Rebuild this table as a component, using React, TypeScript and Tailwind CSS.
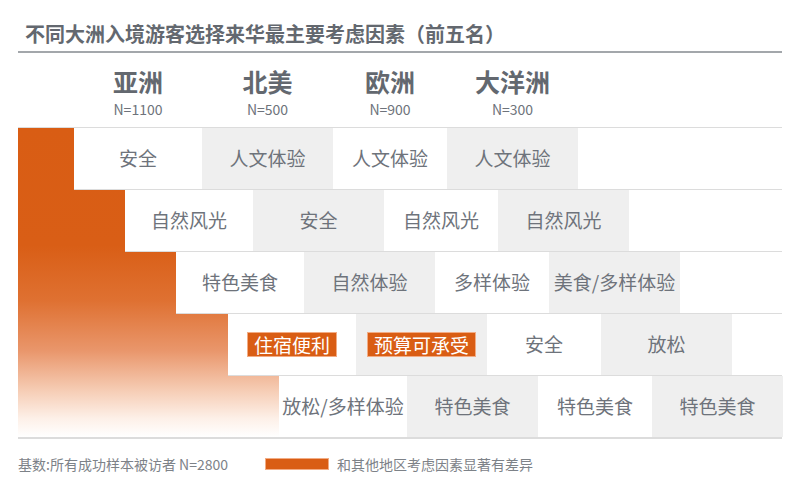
import React from "react";

type Cell = { text: string; hot?: boolean };

const WIDTHS = ["w-[128px]", "w-[131px]", "w-[114px]", "w-[131px]"];
const BG = ["bg-white", "bg-[#efefef]", "bg-white", "bg-[#efefef]"];

const REGIONS = [
  { name: "亚洲", n: "N=1100" },
  { name: "北美", n: "N=500" },
  { name: "欧洲", n: "N=900" },
  { name: "大洋洲", n: "N=300" },
];

const ROWS: { offset: string; cells: Cell[] }[] = [
  {
    offset: "ml-[56px]",
    cells: [{ text: "安全" }, { text: "人文体验" }, { text: "人文体验" }, { text: "人文体验" }],
  },
  {
    offset: "ml-[107px]",
    cells: [{ text: "自然风光" }, { text: "安全" }, { text: "自然风光" }, { text: "自然风光" }],
  },
  {
    offset: "ml-[158px]",
    cells: [{ text: "特色美食" }, { text: "自然体验" }, { text: "多样体验" }, { text: "美食/多样体验" }],
  },
  {
    offset: "ml-[210px]",
    cells: [{ text: "住宿便利", hot: true }, { text: "预算可承受", hot: true }, { text: "安全" }, { text: "放松" }],
  },
  {
    offset: "ml-[261px]",
    cells: [{ text: "放松/多样体验" }, { text: "特色美食" }, { text: "特色美食" }, { text: "特色美食" }],
  },
];

export default function App() {
  return (
    <div
      className="w-[800px] h-[492px] bg-white text-[#6e737b]"
      style={{ fontFamily: '"Noto Sans CJK SC", "Noto Sans", sans-serif' }}
    >
      {/* title */}
      <div className="mx-[18px] pt-[20px] pb-[3px] pl-[7px] border-b-2 border-[#a3a7ab]">
        <h1 className="text-[20px] leading-[28px] font-bold text-[#63686f]">
          不同大洲入境游客选择来华最主要考虑因素（前五名）
        </h1>
      </div>

      {/* region headers */}
      <div className="mx-[18px] pt-[13px] pb-[9px]">
        <div className="ml-[56px] flex">
          {REGIONS.map((r, i) => (
            <div key={r.name} className={`${WIDTHS[i]} flex flex-col items-center`}>
              <span className="text-[25px] leading-[30px] font-bold text-[#63686f]">{r.name}</span>
              <span className="mt-[5px] text-[14px] leading-[17px] text-[#6e737b]">{r.n}</span>
            </div>
          ))}
        </div>
      </div>

      {/* staircase table */}
      <div className="mx-[18px] border-t border-b-2 border-[#dcdcdc] bg-no-repeat bg-[length:261px_100%] bg-[linear-gradient(to_bottom,#d95d14_0%,#d95e16_38%,#df7132_56%,#e9966b_72%,#f6cdb5_85%,#fdf0e8_94%,#ffffff_100%)]">
        {ROWS.map((row, ri) => (
          <div
            key={ri}
            className={`${row.offset} flex bg-white ${
              ri < ROWS.length - 1 ? "h-[62px] border-b border-[#dcdcdc]" : "h-[61px]"
            }`}
          >
            {row.cells.map((c, ci) => (
              <div
                key={ci}
                className={`${WIDTHS[ci]} ${BG[ci]} flex items-center justify-center shrink-0`}
              >
                {c.hot ? (
                  <span className="h-[25px] px-[6px] flex items-center bg-[#d95d14] border border-[#f2ac84] text-white text-[19px] leading-none">
                    {c.text}
                  </span>
                ) : (
                  <span className="-mt-[2px] text-[19px] leading-none whitespace-nowrap">{c.text}</span>
                )}
              </div>
            ))}
            <div className="flex-1 bg-white" />
          </div>
        ))}
      </div>

      {/* footer */}
      <div className="mx-[18px] mt-[16px] h-[18px] flex items-center text-[14px] text-[#7d8288]">
        <span className="w-[247px] whitespace-nowrap">基数:所有成功样本被访者 N=2800</span>
        <span className="w-[64px] h-[12px] bg-[#d95d14] border border-[#f2ac84]" />
        <span className="ml-[8px]">和其他地区考虑因素显著有差异</span>
      </div>
    </div>
  );
}
